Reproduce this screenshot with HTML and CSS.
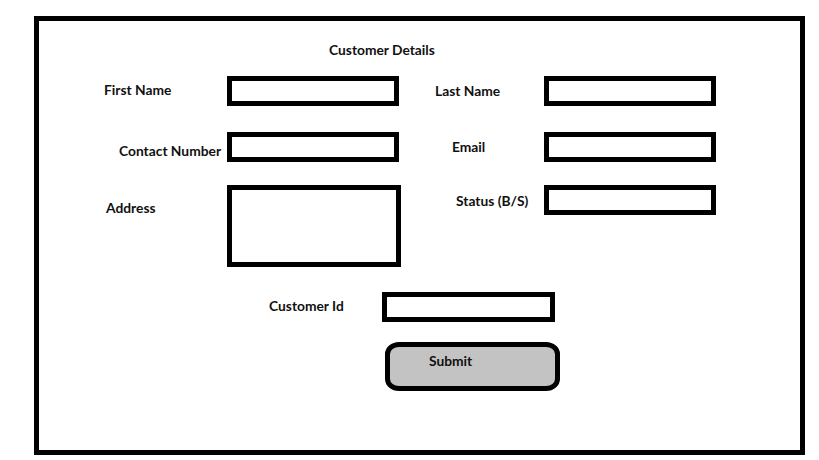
FILE: index.html
```html
<!DOCTYPE html>
<html lang="en">
<head>
  <meta charset="UTF-8" />
  <meta name="viewport" content="width=device-width, initial-scale=1.0" />
  <title>Customer Details</title>
  <link rel="stylesheet" href="styles.css">
</head>
<body>

  <div class="frame">

    <div class="title">Customer Details</div>

    <div class="row row-first">
      <label class="label label-first">First Name</label>
      <input class="field" type="text" />
      <label class="label label-last">Last Name</label>
      <input class="field" type="text" />
    </div>

    <div class="row row-second">
      <label class="label label-contact">Contact Number</label>
      <input class="field" type="text" />
      <label class="label label-email">Email</label>
      <input class="field" type="text" />
    </div>

    <div class="row row-third">
      <label class="label label-address">Address</label>
      <textarea class="field field-area"></textarea>
      <label class="label label-status">Status (B/S)</label>
      <input class="field" type="text" />
    </div>

    <div class="id-row">
      <label class="label label-id">Customer Id</label>
      <input class="field field-id" type="text" />
    </div>

    <button class="submit-btn" type="button">Submit</button>

  </div>

</body>
</html>
```

FILE: styles.css
```css
    * {
      margin: 0;
      padding: 0;
      box-sizing: border-box;
    }

    body {
      font-family: Lato, "Liberation Sans", sans-serif;
      background: white;
      color: #111;
    }

    .frame {
      margin: 16px 0 0 34px;
      width: 771px;
      height: 439px;
      border: 5px solid black;
    }

    .title, .label, .submit-btn {
      font-weight: bold;
      font-size: 13.8px;
      line-height: 18px;
      white-space: nowrap;
    }

    .title {
      margin-top: 20px;
      padding-left: 290px;
    }

    .row {
      display: grid;
      grid-template-columns: 188px 174px 143px 172px;
      align-items: center;
    }

    .row-first {
      margin-top: 17px;
      height: 30px;
    }

    .row-second {
      margin-top: 26px;
      height: 30px;
    }

    .row-third {
      margin-top: 23px;
      height: 82px;
      align-items: start;
    }

    .field {
      display: block;
      width: 172px;
      height: 30px;
      border: 5px solid black;
      background: white;
      outline: none;
      font: inherit;
    }

    .field-area {
      width: 174px;
      height: 82px;
      resize: none;
    }

    .label-first { margin-left: 65px; margin-top: -2px; }
    .label-last { margin-left: 34px; }
    .label-contact { margin-left: 80px; margin-top: 8px; }
    .label-email { margin-left: 51px; }
    .label-address { margin-left: 67px; margin-top: 14px; }
    .label-status { margin-left: 55px; margin-top: 7px; }

    .id-row {
      display: flex;
      align-items: center;
      margin-top: 25px;
      padding-left: 230px;
    }

    .label-id {
      width: 113px;
      margin-top: -2px;
    }

    .field-id {
      width: 173px;
    }

    .submit-btn {
      display: flex;
      align-items: flex-start;
      margin: 20px 0 0 346px;
      width: 175px;
      height: 49px;
      border: 5px solid black;
      border-radius: 14px / 12px;
      background: #c3c3c3;
      color: #111;
      font-family: inherit;
      padding: 5px 0 0 39px;
    }
```
